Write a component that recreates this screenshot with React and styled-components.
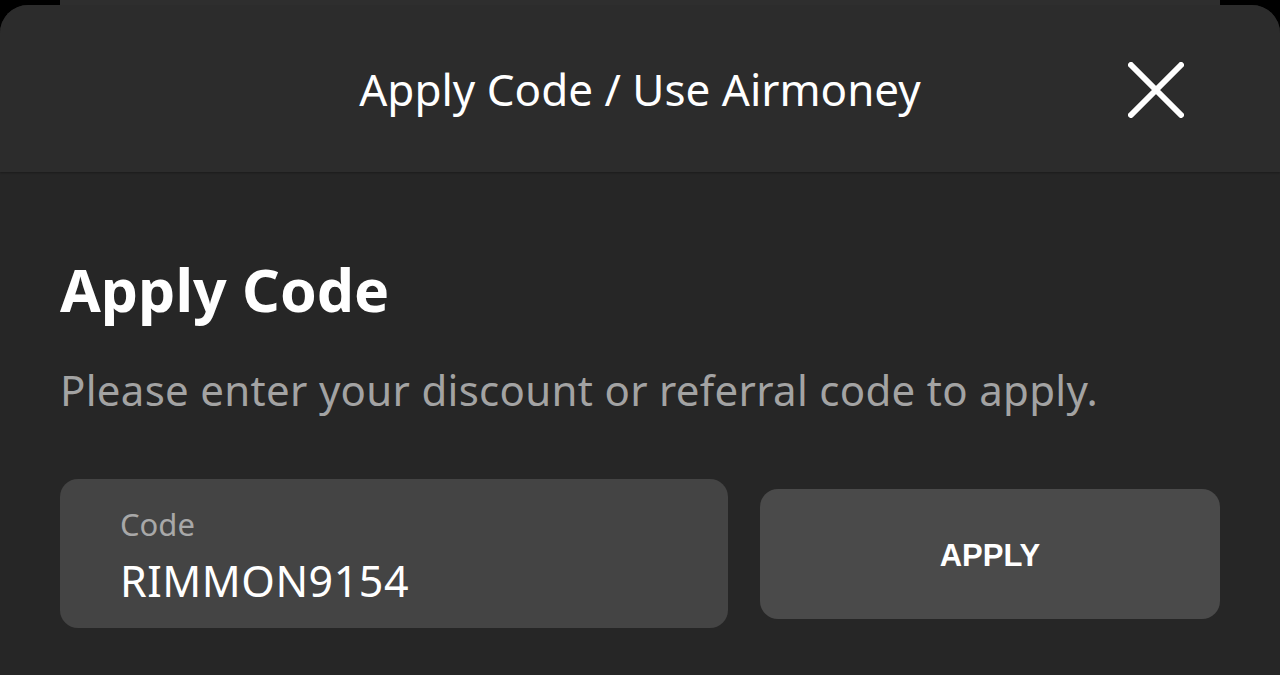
import React, { useState } from "react";
import styled, { createGlobalStyle } from "styled-components";

const GlobalStyle = createGlobalStyle`
  html, body {
    margin: 0;
    padding: 0;
    background: #000;
    height: 100%;
  }
  #root {
    height: 100%;
  }
`;

const App = () => {
  const [code, setCode] = useState("RIMMON9154");

  return (
    <>
      <GlobalStyle />
      <Screen>
        <BehindCard />
        <Sheet>
          <Header>
            <HeaderTitle>Apply Code / Use Airmoney</HeaderTitle>
            <CloseButton aria-label="Close">
              <svg width="56" height="56" viewBox="0 0 56 56">
                <path
                  d="M3 3 L53 53 M53 3 L3 53"
                  stroke="#fff"
                  strokeWidth="6"
                  strokeLinecap="round"
                  fill="none"
                />
              </svg>
            </CloseButton>
          </Header>
          <Body>
            <Heading>Apply Code</Heading>
            <Description>
              Please enter your discount or referral code to apply.
            </Description>
            <Row>
              <Field>
                <Label>Code</Label>
                <Input
                  type="text"
                  value={code}
                  onChange={e => setCode(e.target.value)}
                />
              </Field>
              <ApplyButton type="button">APPLY</ApplyButton>
            </Row>
          </Body>
        </Sheet>
      </Screen>
    </>
  );
};

const Screen = styled.div`
  display: flex;
  flex-direction: column;
  height: 675px;
  overflow: hidden;
  background: #000;
  font-family: "Noto Sans", "Open Sans", sans-serif;
`;

const BehindCard = styled.div`
  height: 5px;
  margin: 0 60px;
  background: #2e2e2e;
  flex-shrink: 0;
`;

const Sheet = styled.div`
  flex: 1;
  display: flex;
  flex-direction: column;
  border-radius: 28px 28px 0 0;
  background: #262626;
  overflow: hidden;
`;

const Header = styled.div`
  position: relative;
  display: flex;
  align-items: center;
  justify-content: center;
  height: 167px;
  flex-shrink: 0;
  background: #2c2c2c;
  box-shadow: 0 1px 2px rgba(0, 0, 0, 0.3);
`;

const HeaderTitle = styled.h1`
  margin: 0;
  font-size: 44px;
  font-weight: 400;
  color: #fff;
`;

const CloseButton = styled.button`
  position: absolute;
  right: 96px;
  top: 57px;
  padding: 0;
  border: none;
  background: none;
  display: flex;
  cursor: pointer;
`;

const Body = styled.div`
  display: flex;
  flex-direction: column;
  padding: 85px 60px 0 60px;
`;

const Heading = styled.h2`
  margin: 0;
  font-size: 59px;
  font-weight: 700;
  line-height: 64px;
  color: #fff;
`;

const Description = styled.p`
  margin: 43px 0 0;
  font-size: 42px;
  line-height: 52px;
  letter-spacing: 0.3px;
  color: #a3a3a3;
`;

const Row = styled.div`
  display: flex;
  align-items: center;
  gap: 32px;
  margin-top: 63px;
`;

const Field = styled.label`
  display: flex;
  flex-direction: column;
  width: 668px;
  height: 149px;
  flex-shrink: 0;
  box-sizing: border-box;
  padding: 27px 60px 0;
  background: #444;
  border-radius: 18px;
`;

const Label = styled.span`
  font-size: 31px;
  line-height: 36px;
  color: #a8a8a8;
`;

const Input = styled.input`
  margin-top: 13px;
  padding: 0;
  border: none;
  outline: none;
  background: transparent;
  font-family: "Noto Sans", "Open Sans", sans-serif;
  font-size: 43px;
  line-height: 52px;
  height: 52px;
  letter-spacing: 0.5px;
  color: #fff;
`;

const ApplyButton = styled.button`
  flex: 1;
  height: 130px;
  border: none;
  border-radius: 18px;
  background: #4a4a4a;
  color: #fff;
  font-family: "Liberation Sans", Arial, sans-serif;
  font-weight: 700;
  font-size: 31px;
  padding: 4px 0 0;
  cursor: pointer;
`;

export default App;
